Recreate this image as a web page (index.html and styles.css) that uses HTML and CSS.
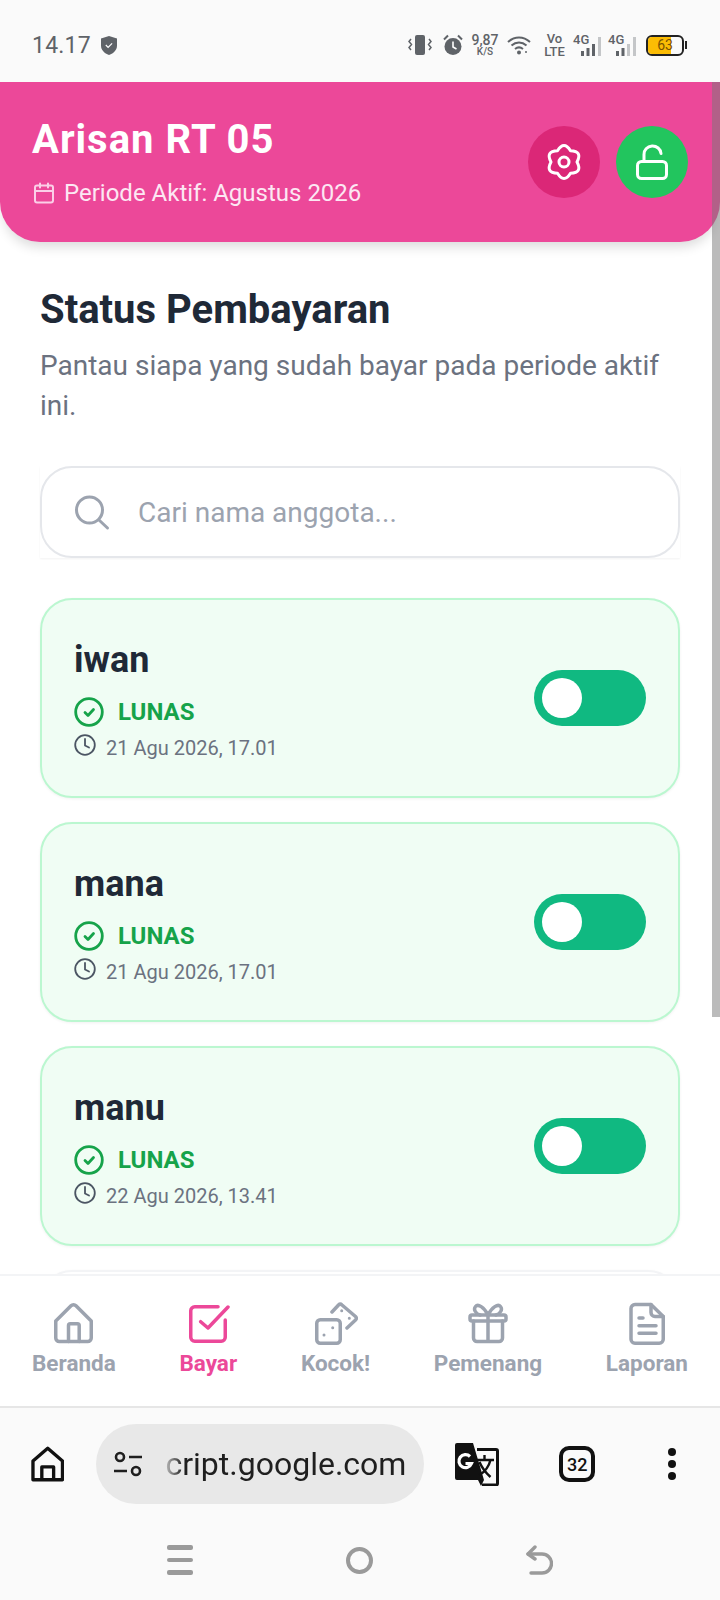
FILE: index.html
```html
<!DOCTYPE html>
<html lang="id">

<head>
  <meta charset="UTF-8">
  <meta name="viewport" content="width=device-width, initial-scale=1.0">
  <title>Arisan RT 05</title>
  <link rel="stylesheet" href="styles.css">
</head>

<body>

  <div id="status-bar">
    <div class="status-left">
      <span class="status-time">14.17</span>
      <svg width="16" height="19" viewBox="0 0 16 19"><path d="M8 0l8 2.500v7c0 4.500-3.300 7.800-8 9.500-4.700-1.700-8-5-8-9.500v-7z" fill="#5f6368"/><path d="M4.800 9l2.300 2.300 4-4" fill="none" stroke="#fff" stroke-width="1.200"/></svg>
    </div>
    <div class="status-right">
      <svg class="st-vibrate" width="24" height="20" viewBox="0 0 24 20"><rect x="7" y="0" width="10" height="20" rx="2" fill="#5f6368"/><path d="M3 4L1 6.500 3.500 9.500 1 12.500 3 15M21 4l2 2.500-2.500 3 2.500 3-2 2.500" fill="none" stroke="#5f6368" stroke-width="1.500"/></svg>
      <svg class="st-alarm" width="20" height="22" viewBox="0 0 20 22"><circle cx="10" cy="12.500" r="8.500" fill="#5f6368"/><path d="M10 7.500v5.500l3.500 2" fill="none" stroke="#fff" stroke-width="1.600"/><path d="M1 5.500L5 1.500M19 5.500l-4-4" stroke="#5f6368" stroke-width="2"/></svg>
      <div class="st-speed"><span>9,87</span><span class="st-unit">K/S</span></div>
      <svg class="st-wifi" width="24" height="20" viewBox="0 0 24 20"><path d="M1 7c6.500-6 15.500-6 22 0M4.500 10.500c4.500-4 10.500-4 15 0M8 14c2.500-2 5.500-2 8 0" fill="none" stroke="#5f6368" stroke-width="2"/><circle cx="12" cy="17.500" r="2" fill="#5f6368"/><circle cx="19" cy="17" r="1" fill="#5f6368"/></svg>
      <div class="st-volte"><span>Vo</span><span>LTE</span></div>
      <div class="st-signal st-sim1">
        <span class="st-4g">4G</span>
        <svg width="20" height="19" viewBox="0 0 20 19"><rect x="0" y="14" width="3" height="5" fill="#5f6368"/><rect x="5.500" y="11" width="3" height="8" fill="#5f6368"/><rect x="11" y="7" width="3" height="12" fill="#5f6368"/><rect x="17" y="0" width="3" height="19" fill="#c4c6c8"/></svg>
      </div>
      <div class="st-signal st-sim2">
        <span class="st-4g">4G</span>
        <svg width="20" height="19" viewBox="0 0 20 19"><rect x="0" y="14" width="3" height="5" fill="#5f6368"/><rect x="5.500" y="11" width="3" height="8" fill="#5f6368"/><rect x="11" y="7" width="3" height="12" fill="#c4c6c8"/><rect x="17" y="0" width="3" height="19" fill="#c4c6c8"/></svg>
      </div>
      <div class="st-battery">
        <div class="st-battery-body"><div class="st-battery-fill"></div><span>63</span></div>
        <div class="st-battery-tip"></div>
      </div>
    </div>
  </div>

  <div id="page">
    <div id="scroll-thumb"></div>

    <header id="app-header">
      <div class="header-text">
        <h1>Arisan RT 05</h1>
        <div class="period">
          <svg width="24" height="24" viewBox="0 0 24 24" fill="none" stroke="#fbcfe8" stroke-width="2" stroke-linecap="round" stroke-linejoin="round"><rect x="3" y="4.500" width="18" height="17" rx="2"/><path d="M3 10h18M8 2.500v4M16 2.500v4"/></svg>
          <span>Periode Aktif: Agustus 2026</span>
        </div>
      </div>
      <div class="header-actions">
        <div class="round-btn btn-settings">
          <svg width="44" height="44" viewBox="0 0 44 44" fill="none" stroke="#fff" stroke-width="3" stroke-linecap="round" stroke-linejoin="round"><path d="M15.500 10.740Q22 .3 28.500 10.740 40.790 11.150 35 22 40.790 32.850 28.500 33.260 22 43.700 15.500 33.260 3.210 32.850 9 22 3.210 11.150 15.500 10.740z"/><circle cx="22" cy="22" r="5"/></svg>
        </div>
        <div class="round-btn btn-lock">
          <svg width="44" height="44" viewBox="0 0 44 44" fill="none" stroke="#fff" stroke-width="3" stroke-linecap="round" stroke-linejoin="round"><rect x="7.500" y="21.500" width="29" height="17" rx="4"/><path d="M14 21.500v-7a8.500 8 0 0 1 17-1"/></svg>
        </div>
      </div>
    </header>

    <main id="content">
      <h2>Status Pembayaran</h2>
      <p class="subtitle">Pantau siapa yang sudah bayar pada periode aktif ini.</p>

      <div class="search-wrap">
        <div class="search-box">
          <svg width="38" height="38" viewBox="0 0 38 38" fill="none" stroke="#9ca3af" stroke-width="3" stroke-linecap="round"><circle cx="15.500" cy="17" r="13"/><path d="M25 27l8.500 8"/></svg>
          <span>Cari nama anggota...</span>
        </div>
      </div>

      <div class="member-card">
        <div class="member-info">
          <div class="member-name">iwan</div>
          <div class="member-status">
            <svg width="30" height="30" viewBox="0 0 30 30" fill="none" stroke="#16a34a" stroke-width="2.800" stroke-linecap="round" stroke-linejoin="round"><circle cx="15" cy="15" r="13.300"/><path d="M11 15.500l3 3 5.500-6"/></svg>
            <span>LUNAS</span>
          </div>
          <div class="member-time">
            <svg width="22" height="22" viewBox="0 0 22 22" fill="none" stroke="#4b5563" stroke-width="1.800" stroke-linecap="round" stroke-linejoin="round"><circle cx="11" cy="11" r="9.800"/><path d="M11 5v6.500l4 2"/></svg>
            <span>21 Agu 2026, 17.01</span>
          </div>
        </div>
        <div class="toggle"><div class="toggle-knob"></div></div>
      </div>

      <div class="member-card">
        <div class="member-info">
          <div class="member-name">mana</div>
          <div class="member-status">
            <svg width="30" height="30" viewBox="0 0 30 30" fill="none" stroke="#16a34a" stroke-width="2.800" stroke-linecap="round" stroke-linejoin="round"><circle cx="15" cy="15" r="13.300"/><path d="M11 15.500l3 3 5.500-6"/></svg>
            <span>LUNAS</span>
          </div>
          <div class="member-time">
            <svg width="22" height="22" viewBox="0 0 22 22" fill="none" stroke="#4b5563" stroke-width="1.800" stroke-linecap="round" stroke-linejoin="round"><circle cx="11" cy="11" r="9.800"/><path d="M11 5v6.500l4 2"/></svg>
            <span>21 Agu 2026, 17.01</span>
          </div>
        </div>
        <div class="toggle"><div class="toggle-knob"></div></div>
      </div>

      <div class="member-card">
        <div class="member-info">
          <div class="member-name">manu</div>
          <div class="member-status">
            <svg width="30" height="30" viewBox="0 0 30 30" fill="none" stroke="#16a34a" stroke-width="2.800" stroke-linecap="round" stroke-linejoin="round"><circle cx="15" cy="15" r="13.300"/><path d="M11 15.500l3 3 5.500-6"/></svg>
            <span>LUNAS</span>
          </div>
          <div class="member-time">
            <svg width="22" height="22" viewBox="0 0 22 22" fill="none" stroke="#4b5563" stroke-width="1.800" stroke-linecap="round" stroke-linejoin="round"><circle cx="11" cy="11" r="9.800"/><path d="M11 5v6.500l4 2"/></svg>
            <span>22 Agu 2026, 13.41</span>
          </div>
        </div>
        <div class="toggle"><div class="toggle-knob"></div></div>
      </div>

      <div class="member-card member-card-plain"></div>
    </main>

    <nav id="bottom-nav">
      <div class="nav-item">
        <svg width="44" height="44" viewBox="0 0 44 44" fill="none" stroke="#9ca3af" stroke-width="3.500" stroke-linecap="round" stroke-linejoin="round"><path d="M3.750 19L19 3.800a3.500 3.500 0 0 1 5 0L39.250 19v17a3.500 3.500 0 0 1-3.500 3.500H7.250a3.500 3.500 0 0 1-3.500-3.500z"/><path d="M16.500 39.500v-16a1.750 1.750 0 0 1 1.750-1.750h7.200a1.750 1.750 0 0 1 1.750 1.750v16"/></svg>
        <span>Beranda</span>
      </div>
      <div class="nav-item nav-active">
        <svg width="44" height="44" viewBox="0 0 44 44" fill="none" stroke="#ec4899" stroke-width="3.500" stroke-linecap="round" stroke-linejoin="round"><path d="M39.250 18v17.250a4 4 0 0 1-4 4H8.750a4 4 0 0 1-4-4V8.750a4 4 0 0 1 4-4H32"/><path d="M14.700 19.700L22 26 42 5"/></svg>
        <span>Bayar</span>
      </div>
      <div class="nav-item">
        <svg width="44" height="44" viewBox="0 0 44 44" fill="none" stroke="#9ca3af" stroke-width="3.500" stroke-linecap="round" stroke-linejoin="round"><rect x="2.750" y="17.750" width="23.500" height="23.500" rx="3.500"/><path d="M18 10l6.500-7a2.500 2.500 0 0 1 3.500 0l13.500 11.500a2.500 2.500 0 0 1 0 3.500L33 26"/><path d="M10 33h.01M18.700 25.700h.01M27.700 8.700h.01M35.300 16.300h.01" stroke-width="3"/></svg>
        <span>Kocok!</span>
      </div>
      <div class="nav-item">
        <svg width="44" height="44" viewBox="0 0 44 44" fill="none" stroke="#9ca3af" stroke-width="3.500" stroke-linecap="round" stroke-linejoin="round"><rect x="4" y="13" width="36" height="6" rx="2"/><path d="M7.500 19v17a3.500 3.500 0 0 0 3.500 3.500h22a3.500 3.500 0 0 0 3.500-3.500V19M22 13v26.500"/><path d="M22 13C18 5 12 1.500 9.500 4.500 7 7.500 10 12 14 13M22 13c4-8 10-11.500 12.500-8.500 2.500 3-.5 7.500-4.500 8.500"/></svg>
        <span>Pemenang</span>
      </div>
      <div class="nav-item">
        <svg width="44" height="44" viewBox="0 0 44 44" fill="none" stroke="#9ca3af" stroke-width="3.500" stroke-linecap="round" stroke-linejoin="round"><path d="M26 2.500H10a4 4 0 0 0-4 4v30.750a4 4 0 0 0 4 4h24.250a4 4 0 0 0 4-4V14.500z"/><path d="M26 2.500v8a4 4 0 0 0 4 4h8.250M14 16h4M14 23.700h17M14 31.300h17"/></svg>
        <span>Laporan</span>
      </div>
    </nav>
  </div>

  <div id="browser-bar">
    <svg width="34" height="36" viewBox="0 0 34 36" fill="none" stroke="#111" stroke-width="3.400" stroke-linejoin="round"><path d="M2 15L17 2l15 13v19H2z"/><path d="M11 34V21h12v13"/></svg>
    <div class="url-pill">
      <svg width="30" height="30" viewBox="0 0 30 30" fill="none" stroke="#1f1f1f" stroke-width="2.600"><circle cx="7" cy="8" r="4"/><circle cx="23" cy="22" r="4"/><path d="M16 8h13M1 22h13"/></svg>
      <div class="url-text">cript.google.com</div>
    </div>
    <svg class="translate-icon" width="44" height="44" viewBox="0 0 44 44"><path d="M22 7.500h19a1.500 1.500 0 0 1 1.500 1.500v32.500a1.500 1.500 0 0 1-1.500 1.500H27" fill="none" stroke="#111" stroke-width="3"/><path d="M2 1h16l11 37-3 6-3-6H2a2 2 0 0 1-2-2V3a2 2 0 0 1 2-2z" fill="#111"/><path d="M15 14.500a6.500 6.500 0 1 0 1.500 7h-6" fill="none" stroke="#fff" stroke-width="3.200"/><path d="M21 18h18M29.500 13v5M35.500 18c-1.500 6-6 12-11 15M24.500 20c2.500 6 6.500 11 11 15" fill="none" stroke="#111" stroke-width="2.400"/></svg>
    <div class="tab-count">32</div>
    <div class="more-dots"><i></i><i></i><i></i></div>
  </div>

  <div id="system-nav">
    <div class="sys-menu"><i></i><i></i><i></i></div>
    <div class="sys-home"></div>
    <svg width="28" height="30" viewBox="0 0 28 30" fill="none" stroke="#9a9a9a" stroke-width="3.400" stroke-linecap="round" stroke-linejoin="round"><path d="M3 9h14a8.500 8.500 0 0 1 0 19H6"/><path d="M10 2L3 9l7 5"/></svg>
  </div>

</body>

</html>
```

FILE: styles.css
```css
* {
  margin: 0;
  padding: 0;
  box-sizing: border-box;
  font-family: 'Roboto', sans-serif;
}

html,
body {
  width: 720px;
  height: 1600px;
  overflow: hidden;
  background-color: #fafafa;
}

/* status bar */

#status-bar {
  height: 82px;
  padding: 8px 33px 0 32px;
  display: flex;
  align-items: center;
  justify-content: space-between;
  background-color: #fafafa;
}

.status-left {
  display: flex;
  align-items: center;
  gap: 10px;
}

.status-time {
  font-size: 23px;
  color: #5f6368;
  letter-spacing: .2px;
}

.status-right {
  display: flex;
  align-items: center;
}

.st-alarm {
  margin-left: 11px;
}

.st-speed,
.st-volte {
  display: flex;
  flex-direction: column;
  align-items: center;
  color: #5f6368;
  font-weight: 500;
}

.st-speed {
  width: 26px;
  margin-left: 9px;
  font-size: 14px;
  line-height: 14px;
}

.st-speed .st-unit {
  font-size: 10px;
  line-height: 10px;
}

.st-wifi {
  margin-left: 9px;
}

.st-volte {
  width: 19px;
  margin-left: 14px;
  font-size: 13px;
  line-height: 13px;
}

.st-signal {
  position: relative;
  width: 28px;
  height: 22px;
  display: flex;
  align-items: flex-end;
  justify-content: flex-end;
}

.st-sim1 {
  margin-left: 9px;
}

.st-sim2 {
  margin-left: 7px;
}

.st-4g {
  position: absolute;
  left: 0;
  top: -1px;
  font-size: 13px;
  line-height: 13px;
  font-weight: 500;
  color: #5f6368;
}

.st-battery {
  margin-left: 10px;
  display: flex;
  align-items: center;
  gap: 1px;
}

.st-battery-body {
  position: relative;
  width: 38px;
  height: 21px;
  border: 2px solid #222;
  border-radius: 6px;
  overflow: hidden;
  display: flex;
  align-items: center;
  justify-content: center;
  font-size: 14px;
  color: #7a5200;
}

.st-battery-body span {
  position: relative;
}

.st-battery-fill {
  position: absolute;
  left: 0;
  top: 0;
  bottom: 0;
  width: 68%;
  background-color: #fbbc04;
}

.st-battery-tip {
  width: 2px;
  height: 8px;
  background-color: #222;
}

/* page */

#page {
  position: relative;
  height: 1324px;
  background-color: #fff;
  overflow: hidden;
  display: flex;
  flex-direction: column;
}

#scroll-thumb {
  position: absolute;
  right: 0;
  top: 0;
  width: 8px;
  height: 935px;
  background-color: rgba(120, 120, 120, .5);
  z-index: 5;
}

#app-header {
  height: 160px;
  flex-shrink: 0;
  padding: 0 32px;
  display: flex;
  align-items: center;
  justify-content: space-between;
  background-color: #ec4899;
  border-radius: 0 0 40px 40px;
  box-shadow: 0 8px 12px -3px rgba(0, 0, 0, .14);
  position: relative;
  z-index: 2;
}

.header-text {
  padding-top: 2px;
}

#app-header h1 {
  font-size: 40px;
  font-weight: 700;
  color: #fff;
  line-height: 44px;
  letter-spacing: 1px;
}

.period {
  margin-top: 16px;
  display: flex;
  align-items: center;
  gap: 8px;
  font-size: 24px;
  color: #fce7f3;
  line-height: 30px;
}

.header-actions {
  display: flex;
  gap: 16px;
}

.round-btn {
  width: 72px;
  height: 72px;
  border-radius: 50%;
  display: flex;
  align-items: center;
  justify-content: center;
}

.btn-settings {
  background-color: #db2777;
}

.btn-lock {
  background-color: #22c55e;
}

#content {
  flex: 1;
  padding: 43px 40px 0;
}

#content h2 {
  font-size: 40px;
  font-weight: 700;
  color: #1f2937;
  line-height: 50px;
}

.subtitle {
  margin-top: 11px;
  font-size: 28px;
  line-height: 40px;
  color: #6b7280;
}

.search-wrap {
  margin-top: 40px;
  box-shadow: 0 1px 2px rgba(0, 0, 0, .05);
}

.search-box {
  height: 92px;
  padding: 0 32px;
  display: flex;
  align-items: center;
  gap: 26px;
  background-color: #fff;
  border: 2px solid #e5e7eb;
  border-radius: 32px;
  font-size: 28px;
  color: #9ca3af;
}

.member-card {
  margin-top: 24px;
  height: 200px;
  padding: 0 32px;
  display: flex;
  align-items: center;
  justify-content: space-between;
  background-color: #f0fdf4;
  border: 2px solid #bbf7d0;
  border-radius: 32px;
  box-shadow: 0 1px 3px rgba(0, 0, 0, .06);
}

.search-wrap + .member-card {
  margin-top: 40px;
}

.member-card-plain {
  background-color: #fff;
  border-color: #f3f4f6;
}

.member-info {
  padding-top: 3px;
}

.member-name {
  font-size: 36px;
  font-weight: 700;
  color: #1f2937;
  line-height: 44px;
}

.member-status {
  margin-top: 15px;
  display: flex;
  align-items: center;
  gap: 14px;
  font-size: 24px;
  font-weight: 700;
  color: #16a34a;
  line-height: 30px;
}

.member-time {
  display: flex;
  align-items: flex-start;
  gap: 10px;
  font-size: 20px;
  color: #6b7280;
  line-height: 26px;
  margin-top: 3px;
}

.member-time svg {
  margin-top: 4px;
}

.member-time span {
  margin-top: 5px;
}

.toggle {
  width: 112px;
  height: 56px;
  padding: 8px;
  background-color: #10b981;
  border-radius: 28px;
}

.toggle-knob {
  width: 40px;
  height: 40px;
  border-radius: 50%;
  background-color: #fff;
}

/* bottom nav */

#bottom-nav {
  position: absolute;
  left: 0;
  right: 0;
  bottom: 0;
  height: 132px;
  padding: 0 32px;
  display: flex;
  align-items: flex-start;
  justify-content: space-between;
  background-color: #fff;
  border-top: 2px solid #f3f4f6;
  z-index: 4;
}

.nav-item {
  padding-top: 26px;
  display: flex;
  flex-direction: column;
  align-items: center;
  gap: 4px;
  font-size: 22.500px;
  font-weight: 700;
  color: #9ca3af;
  line-height: 26px;
}

.nav-active {
  color: #ec4899;
}

/* browser */

#browser-bar {
  height: 114px;
  padding: 0 44px 0 31px;
  display: flex;
  align-items: center;
  background-color: #fafafa;
  border-top: 2px solid #e6e6e6;
}

.url-pill {
  width: 328px;
  height: 80px;
  margin: 0 31px 0 32px;
  padding-left: 17px;
  display: flex;
  align-items: center;
  gap: 22px;
  flex-shrink: 0;
  background-color: #e8e8e8;
  border-radius: 40px;
  overflow: hidden;
}

.url-text {
  font-size: 32px;
  color: #1f1f1f;
  white-space: nowrap;
  -webkit-mask-image: linear-gradient(to right, rgba(0, 0, 0, .2), #000 18px);
  mask-image: linear-gradient(to right, rgba(0, 0, 0, .2), #000 18px);
}

.translate-icon {
  flex-shrink: 0;
}

.tab-count {
  width: 36px;
  height: 36px;
  margin-left: 60px;
  border: 4px solid #111;
  border-radius: 10px;
  display: flex;
  align-items: center;
  justify-content: center;
  font-size: 18px;
  font-weight: 500;
  color: #111;
}

.more-dots {
  margin-left: 73px;
  display: flex;
  flex-direction: column;
  gap: 4px;
}

.more-dots i {
  display: block;
  width: 8px;
  height: 8px;
  border-radius: 50%;
  background-color: #111;
}

#system-nav {
  height: 80px;
  padding: 0 167px;
  display: flex;
  align-items: center;
  justify-content: space-between;
  background-color: #fafafa;
}

.sys-menu {
  display: flex;
  flex-direction: column;
  gap: 8px;
}

.sys-menu i {
  display: block;
  width: 26px;
  height: 4.500px;
  border-radius: 2px;
  background-color: #9a9a9a;
}

.sys-home {
  width: 27px;
  height: 27px;
  border: 4px solid #9a9a9a;
  border-radius: 50%;
}
```
